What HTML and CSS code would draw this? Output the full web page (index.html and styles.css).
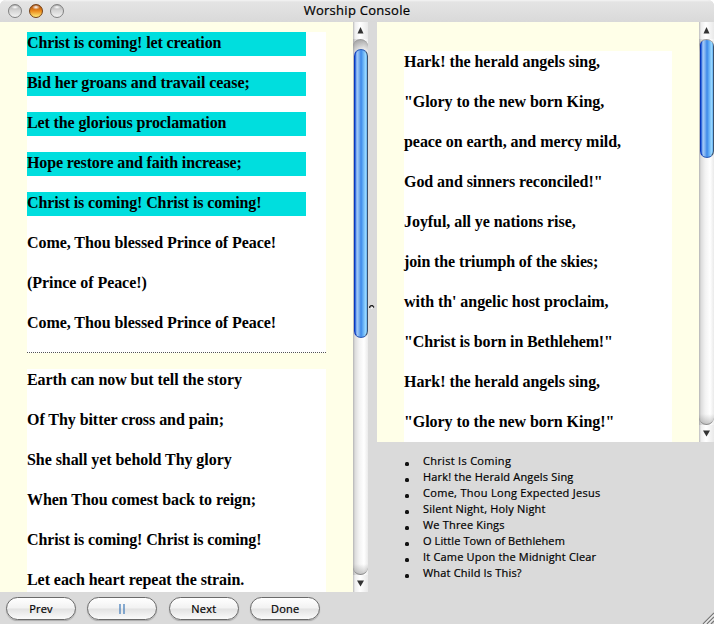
FILE: index.html
```html
<!DOCTYPE html>
<html lang="en">
<head>
<meta charset="utf-8">
<title>Worship Console</title>
<link rel="stylesheet" href="styles.css">
</head>
<body>
<div class="window">
  <header class="titlebar">
    <div class="lights"><i class="light"></i><i class="light amber"></i><i class="light"></i></div>
    <span class="title">Worship Console</span>
  </header>
  <main class="content">
    <section class="lyrics current">
      <div class="stanza first">
        <p class="sung tight">Christ is coming! let creation</p>
        <p class="sung">Bid her groans and travail cease;</p>
        <p class="sung tight">Let the glorious proclamation</p>
        <p class="sung tight">Hope restore and faith increase;</p>
        <p class="sung tight">Christ is coming! Christ is coming!</p>
        <p>Come, Thou blessed Prince of Peace!</p>
        <p>(Prince of Peace!)</p>
        <p>Come, Thou blessed Prince of Peace!</p>
      </div>
      <div class="stanza">
        <p>Earth can now but tell the story</p>
        <p>Of Thy bitter cross and pain;</p>
        <p>She shall yet behold Thy glory</p>
        <p>When Thou comest back to reign;</p>
        <p class="tight">Christ is coming! Christ is coming!</p>
        <p>Let each heart repeat the strain.</p>
      </div>
    </section>
    <div class="scrollbar">
      <div class="cap up"><svg width="15" height="17"><path d="M4.500 11.500 7.500 5 10.500 11.500z" fill="#333"/></svg></div>
      <div class="track"><div class="thumb long"></div></div>
      <div class="cap"><svg width="15" height="17"><path d="M4 5.500h7L7.500 11.500z" fill="#333"/></svg></div>
    </div>
    <div class="splitter"><svg width="6" height="6"><path d="M.7 4V2.700L2 1.700h1.500L5 3.500" fill="none" stroke="#222" stroke-width="1.300"/><path d="M2 4.500 4 3.500" stroke="#fff"/></svg></div>
    <div class="side">
      <div class="preview">
        <section class="lyrics next">
          <div class="stanza">
            <p>Hark! the herald angels sing,</p>
            <p>"Glory to the new born King,</p>
            <p>peace on earth, and mercy mild,</p>
            <p>God and sinners reconciled!"</p>
            <p>Joyful, all ye nations rise,</p>
            <p class="tight">join the triumph of the skies;</p>
            <p>with th' angelic host proclaim,</p>
            <p class="tight">"Christ is born in Bethlehem!"</p>
            <p>Hark! the herald angels sing,</p>
            <p>"Glory to the new born King!"</p>
          </div>
        </section>
        <div class="scrollbar">
          <div class="cap up"><svg width="15" height="17"><path d="M4.500 11.500 7.500 5 10.500 11.500z" fill="#333"/></svg></div>
          <div class="track"><div class="thumb short"></div></div>
          <div class="cap"><svg width="15" height="17"><path d="M4 5.500h7L7.500 11.500z" fill="#333"/></svg></div>
        </div>
      </div>
      <ul class="songs">
        <li class="wide">Christ Is Coming</li>
        <li>Hark! the Herald Angels Sing</li>
        <li class="wide">Come, Thou Long Expected Jesus</li>
        <li>Silent Night, Holy Night</li>
        <li>We Three Kings</li>
        <li class="narrow">O Little Town of Bethlehem</li>
        <li>It Came Upon the Midnight Clear</li>
        <li>What Child Is This?</li>
      </ul>
    </div>
  </main>
  <footer class="controls">
    <button>Prev</button>
    <button class="pause"><svg width="8" height="10"><path d="M2 0v10M6 0v10" stroke="#3c78b8" stroke-width="1.200"/></svg></button>
    <button>Next</button>
    <button>Done</button>
    <svg class="grip" width="12" height="12"><path d="M1 12 12 1M5 12 12 5M9 12 12 9" stroke="#777" stroke-width="1.200"/><path d="M2.500 12 12 2.500M6.500 12 12 6.500" stroke="#fff" stroke-width=".8"/></svg>
  </footer>
</div>
</body>
</html>
```
FILE: styles.css
```css
* { box-sizing: border-box; }
body { margin: 0; background: #fff; overflow: hidden; }
svg { display: block; }
.window {
  width: 714px; height: 624px;
  display: flex; flex-direction: column;
  background: #dadada;
  border-radius: 6px 6px 0 0;
  overflow: hidden;
  font: 11px "Open Sans", "Noto Sans", sans-serif;
  color: #000;
}
.titlebar {
  height: 22px; flex: none;
  display: grid; grid-template-columns: 1fr auto 1fr; align-items: center;
  background: linear-gradient(#f4f4f4, #e4e4e4 2px, #d9d9d9);
}
.lights { display: flex; gap: 7px; padding-left: 8px; }
.light {
  width: 14px; height: 14px; border-radius: 50%;
  border: 1px solid #808080;
  background: radial-gradient(ellipse 4px 2px at 50% 18%, #fff, transparent), linear-gradient(#a9a9a9, #d4d4d4 45%, #f2f2f2);
}
.light.amber {
  border-color: #754014;
  background: radial-gradient(ellipse 4px 2.500px at 50% 18%, #fff, transparent), linear-gradient(#a34508, #ec8b1c 50%, #ffec79);
}
.title { font-size: 13px; line-height: 18px; letter-spacing: .28px; margin-top: -2px; -webkit-text-stroke: .2px #000; }
.content { height: 570px; flex: none; display: flex; }
.lyrics {
  background: #ffffe8; overflow: hidden;
  font: bold 16px/22px "Liberation Serif", serif;
  letter-spacing: -.06px;
}
.tight { letter-spacing: -.12px; }
.current { width: 353px; padding: 10px 27px 0; }
.next { width: 322px; padding: 29px 27px 0; }
.next .stanza { height: 391px; }
.stanza { background: #fff; }
.stanza p { margin: 0 0 16px; padding-bottom: 2px; white-space: nowrap; }
.stanza .sung { width: 279px; background: #00dede; }
.first { height: 321px; margin-bottom: 16px; border-bottom: 1px dotted #555; }
.scrollbar {
  width: 15px; display: flex; flex-direction: column;
  background: linear-gradient(90deg, #aaa, #d4d4d4 2px, #f1f1f1 6px, #fff 11px, #eee);
}
.cap { height: 17px; flex: none; background: linear-gradient(90deg, #bbb, #eee 2px, #fff 7px, #e9e9e9); }
.track {
  flex: 1; border-radius: 8px; overflow: hidden;
  border-top: 1px solid #999; border-bottom: 1px solid #888;
  background:
    linear-gradient(rgba(120,120,120,.6), rgba(160,160,160,0) 12px) no-repeat,
    linear-gradient(0deg, rgba(120,120,120,.4), rgba(160,160,160,0) 10px) no-repeat,
    linear-gradient(90deg, #b4b4b4, #dcdcdc 2px, #f2f2f2 6px, #fff 11px, #eaeaea);
}
.thumb {
  width: 14px; margin-left: 1px; border-radius: 7px;
  border: 1px solid #2859b4; border-left-color: #0838bd; border-right-color: #38506d;
  background: linear-gradient(90deg, #1450d4, #a5ccf8 2px, #7db1f0 4px, #3c88e8 6px, #64aef5 8px, #a0deff 11px, #4a9aed);
}
.long { height: 289px; margin-top: 9px; }
.short { height: 120px; margin-top: -2px; }
.splitter { width: 9px; padding: 282px 0 0 1px; background: #dadada; }
.side { width: 337px; }
.preview { height: 420px; display: flex; }
.songs { margin: 0; padding: 11px 0 0 46px; line-height: 16px; letter-spacing: .18px; list-style: none; -webkit-text-stroke: .2px #000; }
.songs li { display: flex; height: 16px; }
.songs .wide { letter-spacing: .3px; }
.songs .narrow { letter-spacing: .09px; }
.songs li::before { content: ""; width: 4px; height: 4px; border-radius: 1.500px; background: #111; margin: 9px 14px 0 -18px; }
.controls { height: 32px; display: flex; gap: 12px; padding: 5px 0 0 6px; position: relative; }
button {
  width: 70px; height: 23px; margin-right: -.6px; padding: 0 0 1px;
  border: 1.500px solid #6a6a6a; border-radius: 12px;
  background: linear-gradient(#fff, #f2f2f2 48%, #e2e2e2 52%, #fbfbfb);
  box-shadow: 0 1px 1px #aaa;
  font: 11px "Open Sans", "Noto Sans", sans-serif; letter-spacing: .2px; color: #000;
  -webkit-text-stroke: .2px #000;
}
.pause svg { margin: 1px auto 0; }
.grip { position: absolute; right: 0; bottom: 0; }
```
